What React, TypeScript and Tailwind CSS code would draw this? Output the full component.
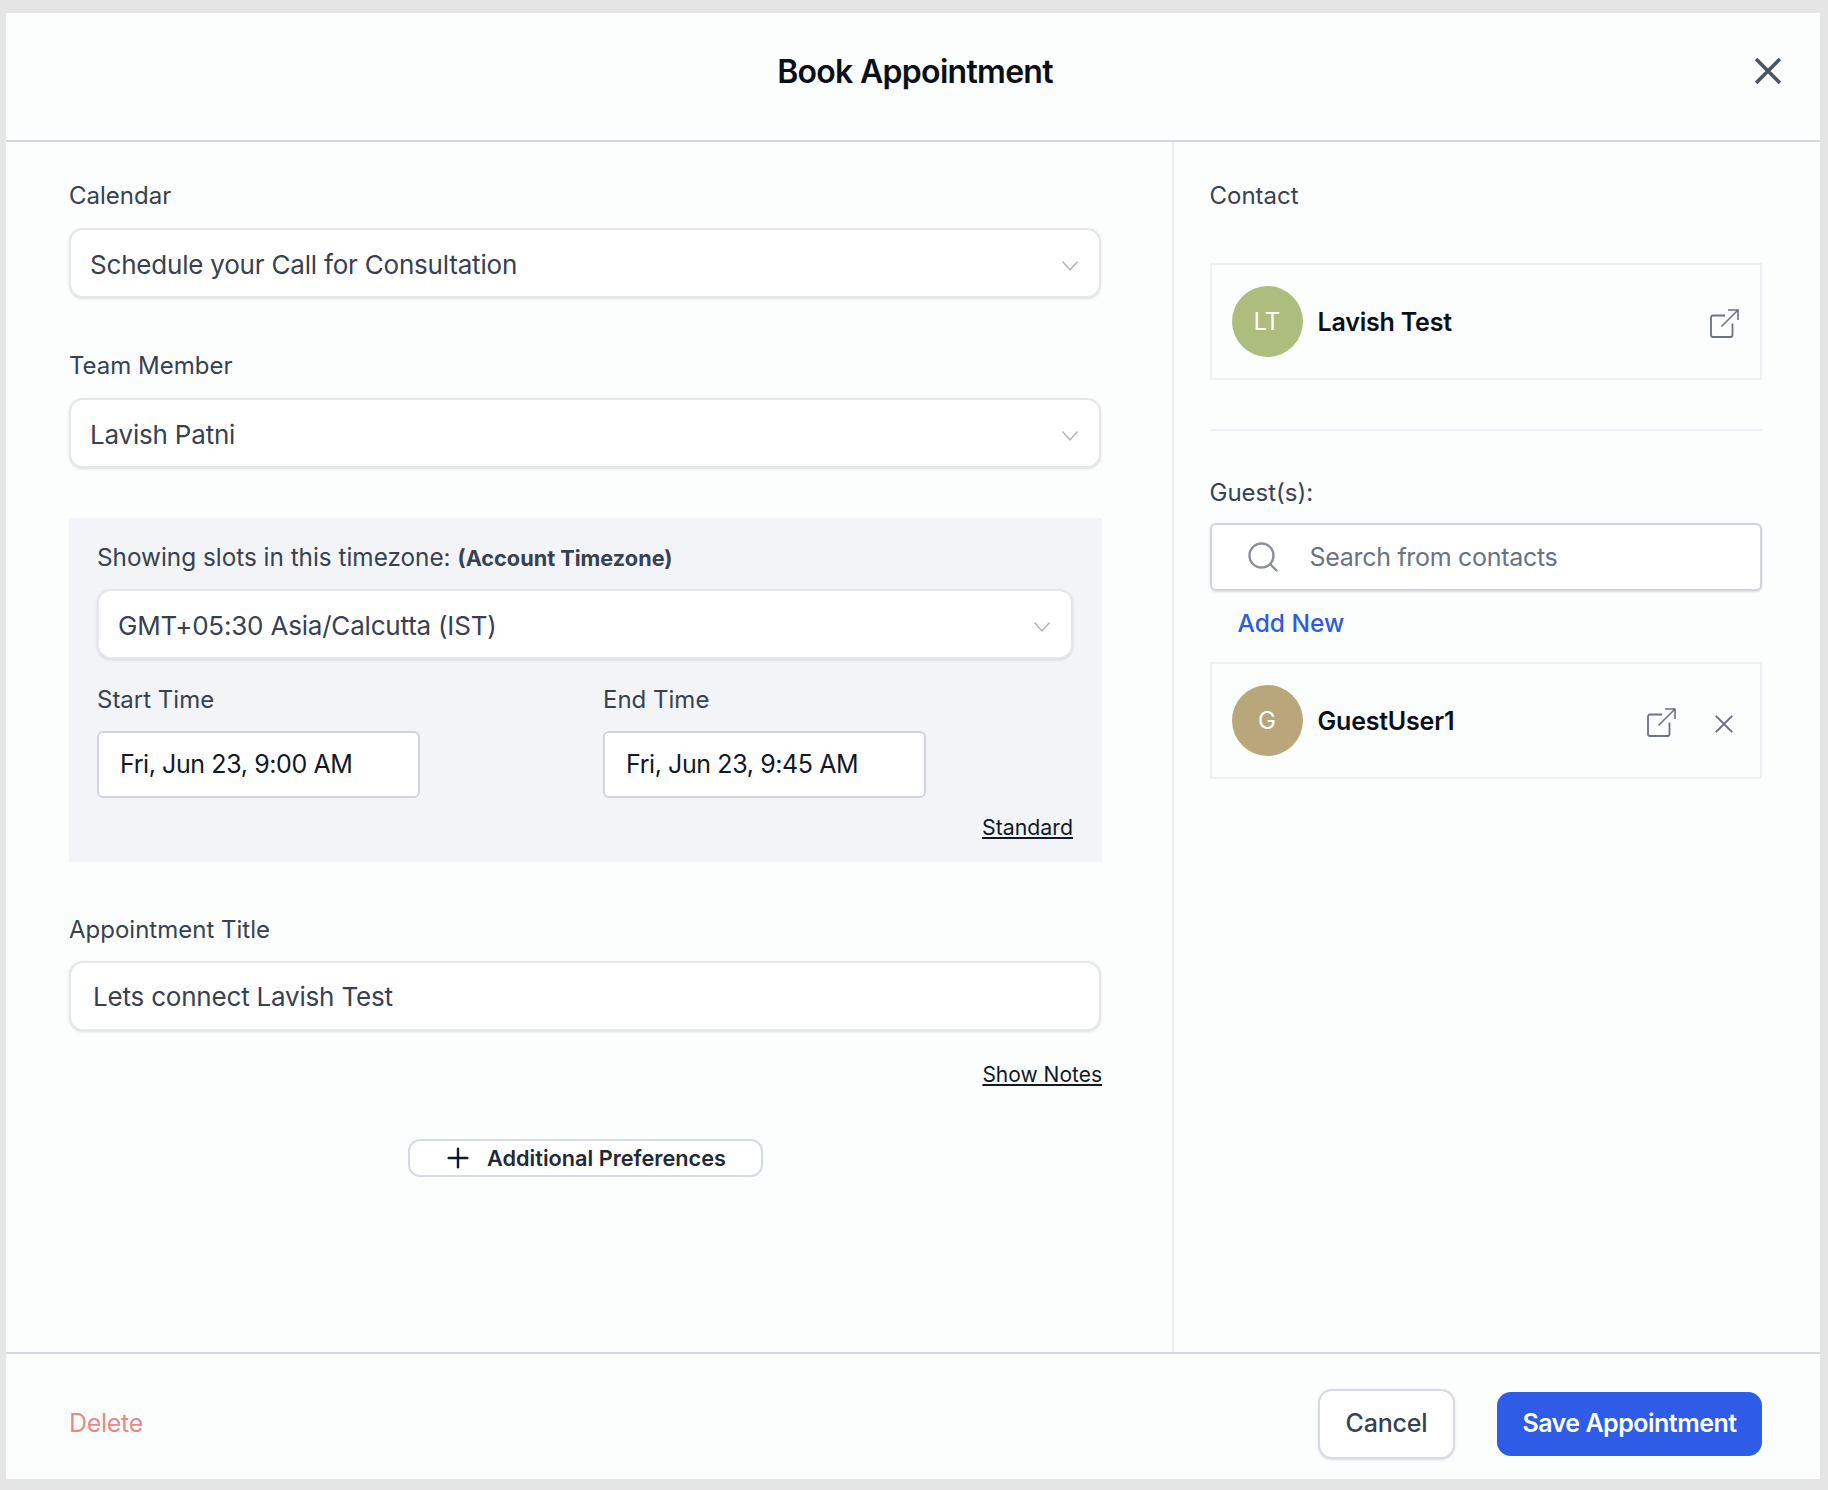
import { Plus, Search } from 'lucide-react'

function Chevron() {
  return (
    <svg width="18" height="12" viewBox="0 0 18 12" fill="none" className="shrink-0">
      <path d="M1.5 1.5 9 10l7.5-8.5" stroke="#adb1ba" strokeWidth="1.4" />
    </svg>
  )
}

function ExternalLink() {
  return (
    <svg width="29" height="29" viewBox="0 0 29 29" fill="none" className="shrink-0">
      <path
        d="M15 6.5H3a2 2 0 0 0-2 2V26a2 2 0 0 0 2 2h17.5a2 2 0 0 0 2-2V14.5"
        stroke="#6b7280"
        strokeWidth="1.8"
      />
      <path d="M11.5 17.5 27.5 1.5M18 1h10v10" stroke="#6b7280" strokeWidth="1.6" />
    </svg>
  )
}

function Cross({ size, width, color }: { size: number; width: number; color: string }) {
  return (
    <svg width={size} height={size} viewBox="0 0 24 24" fill="none" className="shrink-0">
      <path d="M1 1l22 22M23 1 1 23" stroke={color} strokeWidth={width} />
    </svg>
  )
}

function Label({ children }: { children: React.ReactNode }) {
  return <div className="text-[24px] leading-[32px] text-[#374151]">{children}</div>
}

function SelectBox({ value }: { value: string }) {
  return (
    <div className="flex h-[70px] items-center justify-between rounded-[14px] border-2 border-[#e5e7eb] bg-white pl-[19px] pr-[20px] pt-[5px] shadow-sm">
      <span className="mb-[2px] text-[26px] tracking-[-0.2px] text-[#374151]">{value}</span>
      <Chevron />
    </div>
  )
}

function TimeInput({ label, value }: { label: string; value: string }) {
  return (
    <div className="w-[323px]">
      <Label>{label}</Label>
      <div className="mt-[15px] flex h-[67px] items-center rounded-[6px] border-2 border-[#d1d5db] bg-white pl-[21px] text-[25px] tracking-[-0.4px] text-[#111827]">
        {value}
      </div>
    </div>
  )
}

function PersonCard({
  initials,
  name,
  color,
  removable,
}: {
  initials: string
  name: string
  color: string
  removable?: boolean
}) {
  return (
    <div className="flex h-[117px] items-center border-2 border-[#eff0f6] pl-[20px] pr-[21px]">
      <div
        className="flex h-[71px] w-[71px] shrink-0 items-center justify-center rounded-full pt-[1px] text-[24px] text-white"
        style={{ backgroundColor: color }}
      >
        {initials}
      </div>
      <div className="ml-[15px] flex-1 pt-[2px] text-[25px] font-semibold tracking-[-0.2px] text-[#0b0f19]">
        {name}
      </div>
      <div className="mt-[4px]">
        <ExternalLink />
      </div>
      {removable && (
        <div className="ml-[39px] mr-[6px] mt-[6px]">
          <Cross size={18} width={2.4} color="#6b7280" />
        </div>
      )}
    </div>
  )
}

export default function App() {
  return (
    <div className="min-h-[1490px] bg-[#e5e5e5] pb-[11px] pl-[6px] pr-[8px] pt-[13px] font-['Inter',sans-serif]">
      <div className="flex h-[1466px] flex-col bg-[#fcfefe]">
        <header className="relative flex h-[129px] shrink-0 items-center justify-center border-b-2 border-[#d5d7e0]">
          <h1 className="mb-[9px] ml-[4px] text-[32px] font-semibold tracking-[-0.7px] text-[#0b0f19]">
            Book Appointment
          </h1>
          <button className="absolute right-[39px] top-[45px]">
            <Cross size={26} width={3.4} color="#4b5563" />
          </button>
        </header>

        <div className="flex min-h-0 flex-1">
          <div className="w-[1168px] shrink-0 border-r-2 border-[#eceef3] pl-[63px] pr-[71px] pt-[38px]">
            <Label>Calendar</Label>
            <div className="mt-[16px]">
              <SelectBox value="Schedule your Call for Consultation" />
            </div>

            <div className="mt-[52px]">
              <Label>Team Member</Label>
            </div>
            <div className="mt-[16px]">
              <SelectBox value="Lavish Patni" />
            </div>

            <div className="-mr-px mt-[50px] h-[344px] bg-[#f3f4f8] pl-[28px] pr-[29px] pt-[23px]">
              <div className="h-[32px] text-[24.3px] leading-[32px] text-[#374151]">
                Showing slots in this timezone:{' '}
                <span className="text-[21.7px] font-bold">(Account Timezone)</span>
              </div>
              <div className="mt-[16px]">
                <SelectBox value="GMT+05:30 Asia/Calcutta (IST)" />
              </div>
              <div className="mt-[25px] flex gap-[183px]">
                <TimeInput label="Start Time" value="Fri, Jun 23, 9:00 AM" />
                <TimeInput label="End Time" value="Fri, Jun 23, 9:45 AM" />
              </div>
              <div className="mt-[15px] text-right text-[21.3px] leading-[28px] text-[#111827] underline">
                Standard
              </div>
            </div>

            <div className="mt-[52px]">
              <Label>Appointment Title</Label>
            </div>
            <div className="mt-[15px] flex h-[70px] items-center rounded-[14px] border-2 border-[#e5e7eb] bg-white pl-[22px] pt-[1px] text-[26px] tracking-[-0.2px] text-[#374151] shadow-sm">
              Lets connect Lavish Test
            </div>
            <div className="-mr-px mt-[30px] text-right text-[21px] leading-[28px] text-[#111827] underline">
              Show Notes
            </div>
            <div className="mt-[50px] flex justify-center">
              <button className="flex h-[38px] w-[355px] items-center justify-center gap-[13px] rounded-[12px] border-2 border-[#d8dae3] bg-white pr-[2px]">
                <Plus size={32} strokeWidth={1.8} color="#111827" />
                <span className="text-[21.7px] font-semibold text-[#1f2937]">Additional Preferences</span>
              </button>
            </div>
          </div>

          <div className="min-w-0 flex-1 pl-[35.5px] pr-[58px] pt-[38px]">
            <Label>Contact</Label>
            <div className="mt-[51px]">
              <PersonCard initials="LT" name="Lavish Test" color="#adbd7e" />
            </div>
            <div className="mt-[49px] h-[2px] bg-[#f0f1f6]" />
            <div className="mt-[46px]">
              <Label>Guest(s):</Label>
            </div>
            <div className="mt-[14px] flex h-[68px] items-center rounded-[6px] border-2 border-[#d1d5db] bg-white pl-[33px] shadow-sm">
              <Search size={36} strokeWidth={1.6} color="#8b8f98" />
              <span className="ml-[29px] pt-[1px] text-[25px] tracking-[-0.3px] text-[#6b7280]">
                Search from contacts
              </span>
            </div>
            <div className="ml-[28px] mt-[16px] text-[24.5px] font-medium leading-[32px] text-[#2d5be3]">Add New</div>
            <div className="mt-[23px]">
              <PersonCard initials="G" name="GuestUser1" color="#b9a67a" removable />
            </div>
          </div>
        </div>

        <footer className="flex h-[127px] shrink-0 items-center justify-between border-t-2 border-[#d5d7e0] pl-[63px] pr-[58px] pt-[14px]">
          <span className="pt-[1px] text-[25px] tracking-[-0.3px] text-[#e88a84]">Delete</span>
          <div className="flex items-center gap-[42px]">
            <button className="h-[70px] w-[137px] rounded-[14px] border-2 border-[#d8dae3] bg-white text-[25px] font-medium tracking-[-0.2px] text-[#374151] shadow-sm">
              Cancel
            </button>
            <button className="h-[64px] w-[265px] rounded-[14px] bg-[#2e5ce6] pt-[1px] text-[25px] font-semibold tracking-[-0.5px] text-white">
              Save Appointment
            </button>
          </div>
        </footer>
      </div>
    </div>
  )
}
